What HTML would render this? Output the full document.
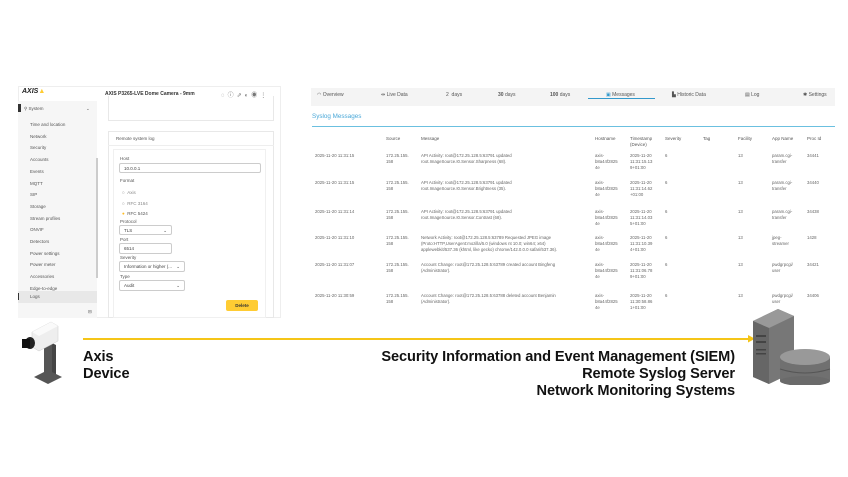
<!DOCTYPE html>
<html><head><style>
*{margin:0;padding:0;box-sizing:border-box}
body{width:848px;height:477px;background:#fff;font-family:"Liberation Sans",sans-serif;position:relative;overflow:hidden;color:#333}
.a{position:absolute;white-space:nowrap}
.s{font-size:4.5px;color:#555}
.t{font-size:4.3px;color:#666;line-height:6px}
.h{font-size:4.5px;color:#555;line-height:6px}
.inp{position:absolute;border:1px solid #ccc;border-radius:2px;background:#fff;font-size:4.5px;color:#444;padding:2px 4px}
.nav{font-size:5px;color:#555}
.big{font-weight:bold;font-size:14.6px;color:#111;line-height:17px;letter-spacing:-0.1px}
</style></head><body>
<!-- left panel -->
<div class="a" style="left:18px;top:86px;width:263px;height:232px;background:#fff;border:1px solid #eee"></div>
<div class="a" style="left:18px;top:101px;width:79px;height:217px;background:#f6f6f6"></div>
<div class="a" style="left:96px;top:158px;width:2px;height:120px;background:#ccc"></div>
<div class="a" style="left:22px;top:88px;font-size:7px;font-weight:bold;color:#222;font-style:italic">AXIS<span style="color:#fc3">▲</span></div>
<div class="a" style="left:105px;top:91px;font-size:5px;font-weight:bold;color:#333">AXIS P3265-LVE Dome Camera - 9mm</div>
<div class="a" style="left:221px;top:90px;font-size:6px;color:#777;letter-spacing:3px">◌ⓘ⇗◐◉⋮</div>
<div class="a" style="left:18px;top:104px;width:3px;height:8px;background:#333"></div>
<div class="a s" style="left:24px;top:106px">⚲ System</div>
<div class="a s" style="left:86px;top:106px">⌄</div>
<div class="a s" style="left:30px;top:119px;line-height:11.7px">Time and location<br>Network<br>Security<br>Accounts<br>Events<br>MQTT<br>SIP<br>Storage<br>Stream profiles<br>ONVIF<br>Detectors<br>Power settings<br>Power meter<br>Accessories<br>Edge-to-edge</div>
<div class="a" style="left:18px;top:291px;width:79px;height:12px;background:#e8e8e8"></div>
<div class="a" style="left:18px;top:293px;width:1px;height:7px;background:#333"></div>
<div class="a s" style="left:30px;top:294px">Logs</div>
<div class="a s" style="left:88px;top:309px">⊟</div>
<div class="a" style="left:108px;top:96px;width:166px;height:25px;border:1px solid #e8e8e8;border-top:none"></div>
<div class="a" style="left:108px;top:131px;width:166px;height:187px;border:1px solid #e8e8e8"></div>
<div class="a" style="left:108px;top:145px;width:166px;height:1px;background:#eee"></div>
<div class="a s" style="left:116px;top:136px">Remote system log</div>
<div class="a" style="left:113px;top:149px;width:153px;height:169px;border:1px solid #f0f0f0"></div>
<div class="a s" style="left:120px;top:156px">Host</div>
<div class="inp" style="left:119px;top:163px;width:142px;height:10px">10.0.0.1</div>
<div class="a s" style="left:120px;top:178px">Format</div>
<div class="a s" style="left:122px;top:188px;line-height:10.5px;color:#888">○ &nbsp;Axis<br>○ &nbsp;RFC 3164<br><span style="color:#fb2">●</span> &nbsp;<span style="color:#555">RFC 5424</span></div>
<div class="a s" style="left:120px;top:219px">Protocol</div>
<div class="inp" style="left:119px;top:225px;width:53px;height:10px">TLS<span style="float:right">⌄</span></div>
<div class="a s" style="left:120px;top:237px">Port</div>
<div class="inp" style="left:119px;top:243px;width:53px;height:11px">6514</div>
<div class="a s" style="left:120px;top:255px">Severity</div>
<div class="inp" style="left:119px;top:261px;width:66px;height:11px">Information or higher (...<span style="float:right">⌄</span></div>
<div class="a s" style="left:120px;top:274px">Type</div>
<div class="inp" style="left:119px;top:280px;width:66px;height:11px">Audit<span style="float:right">⌄</span></div>
<div class="a" style="left:226px;top:300px;width:32px;height:11px;background:#fc3;border-radius:2px;font-size:4.5px;font-weight:bold;text-align:center;line-height:11px;color:#333">Delete</div>
<!-- right panel -->
<div class="a" style="left:311px;top:88px;width:524px;height:18px;background:#f4f4f4"></div>
<div class="a nav" style="left:317px;top:92px">◠ Overview</div>
<div class="a nav" style="left:381px;top:92px">⇹ Live Data</div>
<div class="a nav" style="left:446px;top:92px">2 &nbsp;days</div>
<div class="a nav" style="left:498px;top:92px"><b>30</b> days</div>
<div class="a nav" style="left:550px;top:92px"><b>100</b> days</div>
<div class="a nav" style="left:606px;top:92px"><span style="color:#39c">▣</span> Messages</div>
<div class="a" style="left:588px;top:98px;width:67px;height:1px;background:#39c"></div>
<div class="a nav" style="left:672px;top:92px">▙ Historic Data</div>
<div class="a nav" style="left:745px;top:92px">▤ Log</div>
<div class="a nav" style="left:803px;top:92px">✱ Settings</div>
<div class="a" style="left:312px;top:113px;font-size:6.3px;color:#4aa8d8">Syslog Messages</div>
<div class="a" style="left:312px;top:126px;width:523px;height:1px;background:#6bc0e0"></div>
<div class="a h" style="left:386px;top:136px">Source</div>
<div class="a h" style="left:421px;top:136px">Message</div>
<div class="a h" style="left:595px;top:136px">Hostname</div>
<div class="a h" style="left:630px;top:136px">Timestamp<br>(Device)</div>
<div class="a h" style="left:665px;top:136px">Severity</div>
<div class="a h" style="left:703px;top:136px">Tag</div>
<div class="a h" style="left:738px;top:136px">Facility</div>
<div class="a h" style="left:772px;top:136px">App Name</div>
<div class="a h" style="left:807px;top:136px">Proc Id</div>

<div class="a t" style="left:315px;top:153px">2025-11-20 11:31:15</div><div class="a t" style="left:386px;top:153px">172.25.155.<br>158</div><div class="a t" style="left:421px;top:153px">API Activity: root@172.25.128.5:63791 updated<br>root.ImageSource.I0.Sensor.Sharpness (68).</div><div class="a t" style="left:595px;top:153px">axis-<br>b8a44f2825<br>4e</div><div class="a t" style="left:630px;top:153px">2025-11-20<br>11:31:15.13<br>9+01:00</div><div class="a t" style="left:665px;top:153px">6</div><div class="a t" style="left:738px;top:153px">13</div><div class="a t" style="left:772px;top:153px">param.cgi-<br>transfer</div><div class="a t" style="left:807px;top:153px">34441</div>

<div class="a t" style="left:315px;top:180px">2025-11-20 11:31:15</div><div class="a t" style="left:386px;top:180px">172.25.155.<br>158</div><div class="a t" style="left:421px;top:180px">API Activity: root@172.25.128.5:63791 updated<br>root.ImageSource.I0.Sensor.Brightness (35).</div><div class="a t" style="left:595px;top:180px">axis-<br>b8a44f2825<br>4e</div><div class="a t" style="left:630px;top:180px">2025-11-20<br>11:31:14.62<br>+01:00</div><div class="a t" style="left:665px;top:180px">6</div><div class="a t" style="left:738px;top:180px">13</div><div class="a t" style="left:772px;top:180px">param.cgi-<br>transfer</div><div class="a t" style="left:807px;top:180px">34440</div>

<div class="a t" style="left:315px;top:209px">2025-11-20 11:31:14</div><div class="a t" style="left:386px;top:209px">172.25.155.<br>158</div><div class="a t" style="left:421px;top:209px">API Activity: root@172.25.128.5:63791 updated<br>root.ImageSource.I0.Sensor.Contrast (68).</div><div class="a t" style="left:595px;top:209px">axis-<br>b8a44f2825<br>4e</div><div class="a t" style="left:630px;top:209px">2025-11-20<br>11:31:14.03<br>5+01:00</div><div class="a t" style="left:665px;top:209px">6</div><div class="a t" style="left:738px;top:209px">13</div><div class="a t" style="left:772px;top:209px">param.cgi-<br>transfer</div><div class="a t" style="left:807px;top:209px">34438</div>

<div class="a t" style="left:315px;top:235px">2025-11-20 11:31:10</div><div class="a t" style="left:386px;top:235px">172.25.155.<br>158</div><div class="a t" style="left:421px;top:235px">Network Activity: root@172.25.128.5:63789 Requested JPEG image<br>(Proto:HTTP,UserAgent:mozilla/5.0 (windows nt 10.0; win64; x64)<br>applewebkit/537.36 (khtml, like gecko) chrome/142.0.0.0 safari/537.36).</div><div class="a t" style="left:595px;top:235px">axis-<br>b8a44f2825<br>4e</div><div class="a t" style="left:630px;top:235px">2025-11-20<br>11:31:10.39<br>4+01:00</div><div class="a t" style="left:665px;top:235px">6</div><div class="a t" style="left:738px;top:235px">13</div><div class="a t" style="left:772px;top:235px">jpeg-<br>streamer</div><div class="a t" style="left:807px;top:235px">1428</div>

<div class="a t" style="left:315px;top:262px">2025-11-20 11:31:07</div><div class="a t" style="left:386px;top:262px">172.25.155.<br>158</div><div class="a t" style="left:421px;top:262px">Account Change: root@172.25.128.5:63789 created account Bingfeng<br>(Administrator).</div><div class="a t" style="left:595px;top:262px">axis-<br>b8a44f2825<br>4e</div><div class="a t" style="left:630px;top:262px">2025-11-20<br>11:31:06.78<br>9+01:00</div><div class="a t" style="left:665px;top:262px">6</div><div class="a t" style="left:738px;top:262px">13</div><div class="a t" style="left:772px;top:262px">pwdgrpcgi/<br>user</div><div class="a t" style="left:807px;top:262px">34421</div>

<div class="a t" style="left:315px;top:293px">2025-11-20 11:30:59</div><div class="a t" style="left:386px;top:293px">172.25.155.<br>158</div><div class="a t" style="left:421px;top:293px">Account Change: root@172.25.128.5:63788 deleted account Benjamin<br>(Administrator).</div><div class="a t" style="left:595px;top:293px">axis-<br>b8a44f2825<br>4e</div><div class="a t" style="left:630px;top:293px">2025-11-20<br>11:30:58.86<br>1+01:00</div><div class="a t" style="left:665px;top:293px">6</div><div class="a t" style="left:738px;top:293px">13</div><div class="a t" style="left:772px;top:293px">pwdgrpcgi/<br>user</div><div class="a t" style="left:807px;top:293px">34406</div>

<!-- arrow -->
<div class="a" style="left:83px;top:338px;width:668px;height:1.5px;background:#f5c518"></div>
<svg class="a" style="left:748px;top:335px" width="8" height="8"><polygon points="0,0 7,3.7 0,7.5" fill="#f5c518"/></svg>
<!-- camera -->
<svg class="a" style="left:18px;top:316px" width="60" height="70">
<polygon points="26,30 34,27 34,60 26,63" fill="#555"/>
<polygon points="34,27 38,29 38,60 34,60" fill="#444"/>
<polygon points="16,61 30,54 44,61 30,68" fill="#555"/>
<polygon points="14,16 33,6 40,10 40,25 21,35 14,31" fill="#eee" stroke="#ccc" stroke-width=".5"/>
<polygon points="14,16 33,6 40,10 21,20" fill="#fafafa"/>
<ellipse cx="12" cy="27" rx="5" ry="6" fill="#222"/>
<rect x="4" y="23" width="8" height="9" fill="#111"/>
</svg>
<div class="a big" style="left:83px;top:349px">Axis<br>Device</div>
<div class="a big" style="right:113px;top:349px;text-align:right">Security Information and Event Management (SIEM)<br>Remote Syslog Server<br>Network Monitoring Systems</div>
<!-- server -->
<svg class="a" style="left:748px;top:305px" width="85" height="80">
<polygon points="5,16 30,4 46,11 46,67 21,79 5,72" fill="#777"/>
<polygon points="5,16 30,4 46,11 21,23" fill="#999"/>
<polygon points="5,16 21,23 21,79 5,72" fill="#666"/>
<rect x="8" y="30" width="10" height="2" fill="#444"/><rect x="8" y="36" width="10" height="2" fill="#444"/><rect x="8" y="44" width="10" height="1.5" fill="#444"/><rect x="8" y="48" width="10" height="1.5" fill="#444"/>
<rect x="32" y="52" width="50" height="24" fill="#707070"/>
<ellipse cx="57" cy="76" rx="25" ry="5" fill="#6a6a6a"/>
<ellipse cx="57" cy="52" rx="25" ry="8" fill="#999"/>
<path d="M32 64 Q57 72 82 64" stroke="#555" fill="none"/>
</svg>
</body></html>
